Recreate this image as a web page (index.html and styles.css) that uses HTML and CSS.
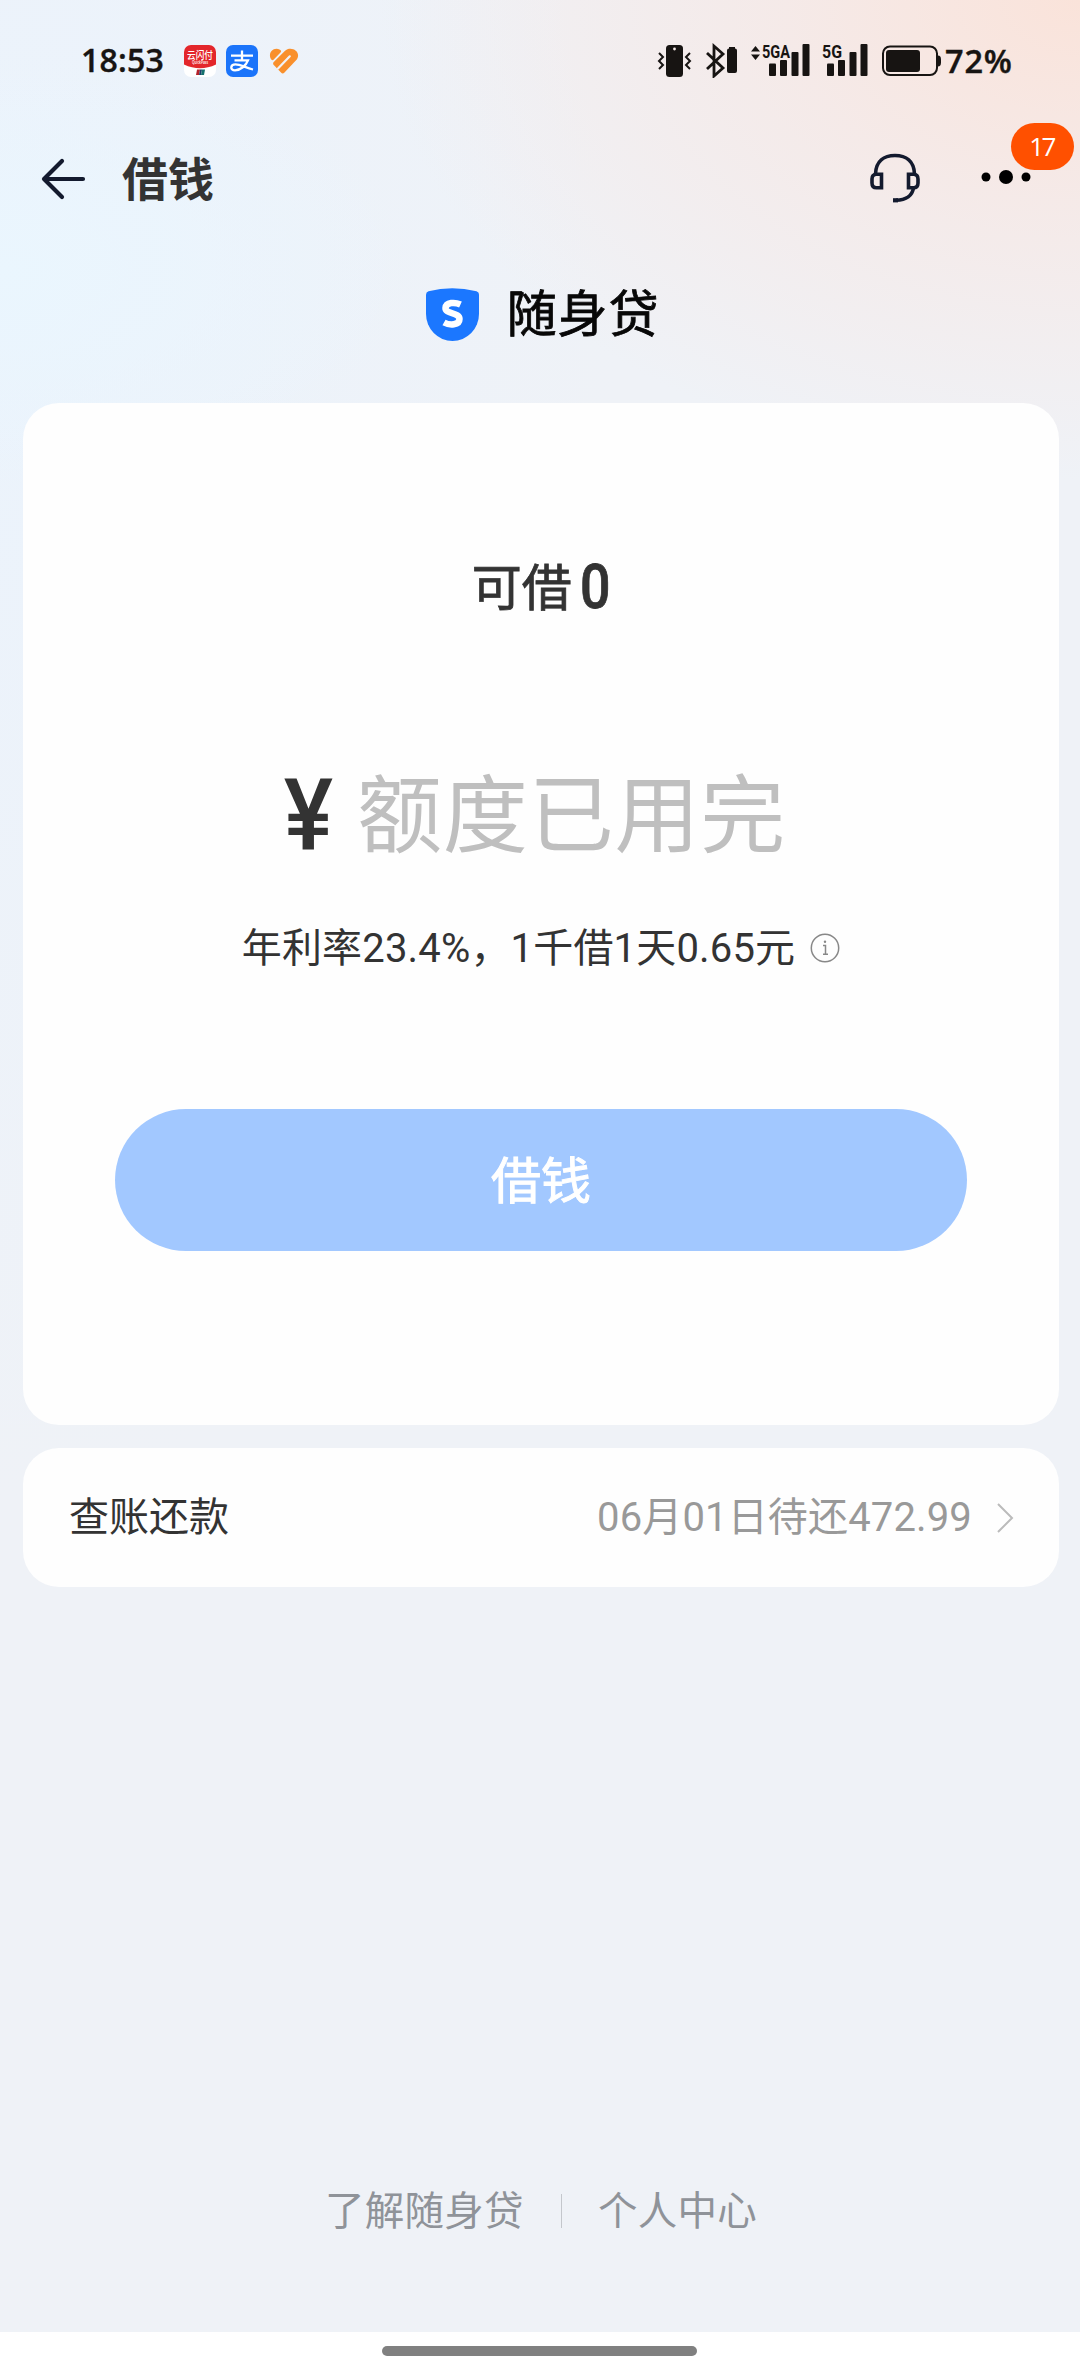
FILE: index.html
```html
<!DOCTYPE html>
<html lang="zh-CN">
<head>
<meta charset="utf-8">
<title>借钱</title>
<link rel="stylesheet" href="styles.css">
</head>
<body>
<div class="screen">
  <div class="status">
    <div class="status-left">
      <span class="time">18:53</span>
      <svg class="app" width="32" height="32" viewBox="0 0 32 32">
        <rect width="32" height="32" rx="7" fill="#fff"/>
        <path d="M0 7a7 7 0 0 1 7-7h18a7 7 0 0 1 7 7v12.500q-16 7.500-32 0z" fill="#e3262b"/>
        <text x="16" y="13.500" class="pay-name" text-anchor="middle" textLength="26" lengthAdjust="spacingAndGlyphs">云闪付</text>
        <text x="16" y="18.800" class="pay-sub" text-anchor="middle" textLength="16" lengthAdjust="spacingAndGlyphs">QuickPass</text>
        <path d="M13 24.500h3l-1 5.500h-3z" fill="#b5222b"/><path d="M16 24.500h2l-1 5.500h-2z" fill="#1d3f6b"/><path d="M18 24.500h3l-1 5.500h-3z" fill="#15706e"/>
      </svg>
      <svg class="app" width="32" height="32" viewBox="0 0 32 32">
        <rect width="32" height="32" rx="7" fill="#1b74fa"/>
        <g fill="none" stroke="#fff" stroke-width="2.300"><path d="M5 10.700h22M16 5.500v9.500M8.500 15.300h13.500C20 20.500 14.500 25.300 9 25.300c-5.300 0-4.800-6 .5-6 5 0 10 3.500 17.500 5.200"/></g>
      </svg>
      <svg class="heart" width="30" height="27" viewBox="0 0 30 27" fill="#f9902c">
        <path d="M2.500 11.800C-2 6 4-2 11 1.800q2 1.200.5 2.700L5 11.300q-1.300 1.500-2.500.5z"/>
        <path d="M5 13.800 15.800 3C22-2.500 32.500 3.500 28 11.200L15.500 24.500q-1.800 1.800-3.500 0L5 17.300q-1.800-1.800 0-3.500z"/>
        <path d="M9 20.500 20.800 8.300" fill="none" stroke="#f1f2f7" stroke-width="2.200" stroke-linecap="round"/>
      </svg>
    </div>
    <div class="status-right">
      <svg class="indicators" width="289" height="36" viewBox="0 0 289 36" fill="#171412">
        <rect x="10" y="3" width="17" height="32" rx="3.500"/><circle cx="18.500" cy="7" r="1.400" fill="#f5e9e7"/>
        <g fill="none" stroke="#171412" stroke-width="2"><path d="m3 11 4 4-4 4 4 4-4 4M34 11l-4 4 4 4-4 4 4 4"/></g>
        <path d="m51 11 16 15-9 8V4l9 8-16 15" fill="none" stroke="#171412" stroke-width="2.800"/>
        <path d="M71 8.500q0-2 2-2V5h6v1.500q2 0 2 2V29q0 2-2 2h-6q-2 0-2-2z"/>
        <path d="M95 9.500 99.500 4l4.500 5.500zM95 12.500h9L99.500 18z"/>
        <text x="106" y="16" class="net" textLength="28" lengthAdjust="spacingAndGlyphs">5GA</text>
        <rect x="113" y="21.500" width="7" height="12.500" rx="1"/><rect x="124" y="18" width="7" height="16" rx="1"/><rect x="135.500" y="10" width="7" height="24" rx="1"/><rect x="146.500" y="2" width="7" height="32" rx="1"/>
        <text x="166" y="16" class="net" textLength="20" lengthAdjust="spacingAndGlyphs">5G</text>
        <rect x="171" y="21.500" width="7" height="12.500" rx="1"/><rect x="182" y="18" width="7" height="16" rx="1"/><rect x="193.500" y="10" width="7" height="24" rx="1"/><rect x="204.500" y="2" width="7" height="32" rx="1"/>
        <rect x="227" y="4.500" width="54" height="28.500" rx="7" fill="none" stroke="#171412" stroke-width="2"/>
        <rect x="230" y="8" width="34" height="22" rx="3"/><path d="M282 13.500q3 0 3 4v3q0 4-3 4z"/>
      </svg>
      <span class="percent">72%</span>
    </div>
  </div>

  <header class="nav">
    <svg width="46" height="42" viewBox="0 0 46 42" fill="none" stroke="#131a2e" stroke-width="4.200" stroke-linecap="round" stroke-linejoin="round"><path d="M22 3 4 21l18 18M4 21h39"/></svg>
    <h1 class="nav-title">借钱</h1>
    <svg class="headset" width="52" height="52" viewBox="0 0 52 52" fill="none" stroke="#131a2e" stroke-width="3.600"><path d="M6.500 22C7 9 15 3.500 26 3.500S45 9 45.500 22"/><path d="M12.500 22.200v13.600H7.500Q3 35.800 3 31v-4q0-4.800 4.500-4.800zM39.500 22.200v13.600h5q4.500 0 4.500-4.800v-4q0-4.800-4.500-4.800z"/><path d="M44.500 36C43 44.500 36 48 27 48.200"/><rect x="24" y="46.200" width="5" height="4.200" fill="#131a2e" stroke="none"/></svg>
    <div class="more">
      <svg width="50" height="16" viewBox="0 0 50 16"><circle cx="5" cy="8" r="4.500"/><circle cx="25" cy="8" r="7"/><circle cx="45" cy="8" r="4.500"/></svg>
      <span class="badge">17</span>
    </div>
  </header>

  <div class="brand">
    <svg width="53" height="54" viewBox="0 0 53 54"><path d="M0 6.500Q0 4 2.500 3.300 26 -3 50.500 3.300 53 4 53 6.500V26a26.500 27 0 0 1-53 0z" fill="#1b77ff"/><path d="M34.500 16.500C29 14 20 14 19.500 20c-.5 6 14 4.500 14 11 0 6.500-10 6.500-15.500 3.500" fill="none" stroke="#fff" stroke-width="6.500"/></svg>
    <span class="brand-name">随身贷</span>
  </div>

  <main class="cards">
    <section class="card loan">
      <div class="quota"><span class="quota-label">可借</span><span class="zero">0</span></div>
      <div class="amount"><span class="yen">¥</span><span class="used">额度已用完</span></div>
      <div class="rate"><span class="rate-text">年利率23.4%，1千借1天0.65元</span>
        <svg width="30" height="30" viewBox="0 0 30 30" fill="none" stroke="#888" stroke-width="1.500"><circle cx="15" cy="15" r="13.700"/><path d="M13 12.500h2.500V21M13 21.300h5"/><circle cx="15" cy="8.700" r="1.200" fill="#888" stroke="none"/></svg>
      </div>
      <button class="borrow">借钱</button>
    </section>
    <section class="card bill">
      <span class="bill-name">查账还款</span>
      <span class="due">06月01日待还472.99</span>
      <svg width="18" height="30" viewBox="0 0 18 30" fill="none" stroke="#bbb" stroke-width="2"><path d="m2 1 14 14L2 29"/></svg>
    </section>
  </main>

  <footer class="links"><span class="link">了解随身贷</span><i class="divider"></i><span class="link">个人中心</span></footer>
  <div class="home"><div class="pill"></div></div>
</div>
</body>
</html>
```
FILE: styles.css
```css
* { box-sizing: border-box; }
body {
  margin: 0;
  font-family: Roboto, "Noto Sans CJK SC", sans-serif;
  color: #333;
}
.screen {
  width: 1080px;
  height: 2374px;
  display: flex;
  flex-direction: column;
  overflow: hidden;
  background:
    radial-gradient(ellipse 700px 480px at 1080px 0, #fae3da 0%, rgba(247, 231, 227, .75) 42%, rgba(241, 242, 247, 0) 100%),
    radial-gradient(ellipse 420px 220px at 0 270px, #eaf6fe 0%, rgba(234, 246, 255, 0) 100%),
    radial-gradient(ellipse 620px 1200px at 0 300px, #ebf3fc 0%, rgba(238, 242, 249, 0) 100%),
    #eff2f7;
}
.status {
  height: 120px;
  flex: none;
  display: flex;
  justify-content: space-between;
  padding: 42px 66px 0 81px;
  color: #171412;
}
.status-left, .status-right { display: flex; height: 38px; align-items: center; }
.time, .percent {
  font: 600 32px/38px "Open Sans", sans-serif;
  -webkit-text-stroke: .4px;
}
.time { width: 103px; letter-spacing: .2px; margin-top: -2px; }
.percent { width: 69px; font-size: 32.500px; letter-spacing: .8px; }
.indicators { margin-top: -2px; }
.app { margin-right: 10px; }
.heart { margin-left: 1px; }
.pay-name { font: 500 10px "Noto Sans CJK SC", sans-serif; fill: #fff; }
.pay-sub { font: 600 4.500px "Open Sans", sans-serif; fill: #fff; }
.net { font: 700 17.500px Roboto, sans-serif; }
.nav {
  height: 118px;
  flex: none;
  display: flex;
  align-items: center;
  padding: 0 49px 0 40px;
}
.nav-title {
  margin: 1px auto 0 36px;
  font-size: 46px;
  line-height: 60px;
  font-weight: 700;
}
.headset { margin: -3px 60px 0 0; }
.more { position: relative; display: flex; margin-top: -5px; }
.badge {
  position: absolute;
  left: 30px;
  top: -46px;
  width: 63px;
  height: 47px;
  padding-right: 2px;
  border-radius: 24px;
  background: #ff5000;
  color: #fff;
  font: 400 26px/46px "Open Sans", sans-serif;
  letter-spacing: -2.500px;
  text-align: center;
}
.brand {
  height: 165px;
  flex: none;
  display: flex;
  align-items: center;
  justify-content: center;
  gap: 28px;
  padding: 0 0 12px 5px;
  color: #080808;
}
.brand-name { font-size: 50px; line-height: 60px; letter-spacing: .8px; -webkit-text-stroke: .8px; }
.cards { padding: 0 21px 0 23px; display: grid; gap: 23px; }
.card { background: #fefefe; border-radius: 36px; }
.loan {
  height: 1022px;
  display: flex;
  flex-direction: column;
  align-items: center;
  padding-top: 148px;
}
.quota {
  display: flex;
  align-items: center;
  height: 72px;
  padding-left: 2px;
  font-size: 50px;
  -webkit-text-stroke: .8px;
}
.quota-label { padding-bottom: 7px; }
.zero { font-size: 61px; font-weight: 500; transform: scaleX(.88); margin-left: 6px; }
.amount { height: 120px; margin-top: 127px; display: flex; align-items: center; }
.yen { font-size: 100px; font-weight: 500; transform: scaleX(.93); padding-top: 10px; }
.used { margin: 0 14px 0 22px; padding-bottom: 3px; font-size: 85px; letter-spacing: .8px; color: #bfbfbf; }
.rate {
  display: flex;
  align-items: center;
  gap: 15px;
  height: 60px;
  margin-top: 48px;
  font-size: 40px;
}
.rate-text { padding-bottom: 7px; letter-spacing: .17px; }
.borrow {
  width: 852px;
  height: 142px;
  margin-top: 131px;
  padding: 0 0 6px;
  border: 0;
  border-radius: 71px;
  background: #a2c8ff;
  color: #fff;
  font: 400 50px Roboto, "Noto Sans CJK SC", sans-serif;
  -webkit-text-stroke: 1px;
}
.bill {
  height: 139px;
  display: flex;
  align-items: center;
  padding: 0 45px 0 46px;
  font-size: 40px;
}
.bill-name { padding-bottom: 7px; }
.due { margin-left: auto; margin-right: 24px; padding-bottom: 7px; letter-spacing: .15px; color: #999; }
.links {
  margin-top: auto;
  height: 60px;
  display: flex;
  align-items: center;
  justify-content: center;
  padding-left: 2px;
  font-size: 39.500px;
  color: #8f9399;
}
.link { padding-bottom: 7px; letter-spacing: .3px; }
.divider { width: 1px; height: 34px; margin: 0 36px 0 37px; background: #c4c7cc; }
.home {
  height: 42px;
  flex: none;
  margin-top: 91px;
  padding-top: 14px;
  background: #fff;
}
.pill { width: 315px; height: 10px; margin-left: 382px; border-radius: 5px; background: #808080; }
```
